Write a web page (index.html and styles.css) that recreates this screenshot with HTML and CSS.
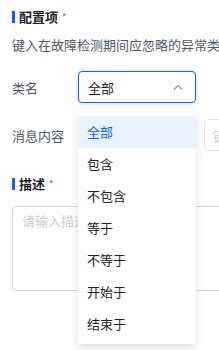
FILE: index.html
```html
<!DOCTYPE html>
<html>
<head>
  <title>配置项</title>
  <link rel="stylesheet" href="styles.css">
</head>
<body>
  <div class="panel">
    <div class="section-title">
      <span class="bar"></span>
      <span>配置项</span>
      <span class="required">*</span>
    </div>
    <p class="section-desc">键入在故障检测期间应忽略的异常类型和消息</p>

    <div class="form-row">
      <label class="form-label">类名</label>
      <div class="select select-open">
        <span class="select-value">全部</span>
        <svg class="select-arrow" width="10" height="6" viewBox="0 0 10 6">
          <polyline points="1,5.5 5,1.5 9,5.5" fill="none" stroke="#86909c" stroke-width="1.2"/>
        </svg>
        <ul class="dropdown">
          <li class="dropdown-item active">全部</li>
          <li class="dropdown-item">包含</li>
          <li class="dropdown-item">不包含</li>
          <li class="dropdown-item">等于</li>
          <li class="dropdown-item">不等于</li>
          <li class="dropdown-item">开始于</li>
          <li class="dropdown-item">结束于</li>
        </ul>
      </div>
    </div>

    <div class="form-row">
      <label class="form-label">消息内容</label>
      <div class="select"></div>
      <input class="text-input" type="text" placeholder="键入消息关键字">
    </div>

    <div class="section-title desc-title">
      <span class="bar"></span>
      <span>描述</span>
      <span class="required">*</span>
    </div>
    <textarea class="textarea" placeholder="请输入描述信息"></textarea>
  </div>
</body>
</html>
```

FILE: styles.css
```css
html,
body {
  overflow: hidden;
}

body {
  margin: 0;
  min-height: 350px;
  font-family: "Noto Sans CJK SC", "Noto Sans", sans-serif;
  font-size: 13px;
  color: #1d2129;
  background-color: #fff;
}

.panel {
  width: 420px;
  min-height: 343px;
  padding: 7px 0 0 12px;
}

.section-title {
  display: flex;
  align-items: center;
  height: 20px;
  line-height: 20px;
  font-weight: 600;
  color: #1d2129;
}

.section-title .bar {
  width: 3px;
  height: 12px;
  margin-right: 4px;
  background-color: #165dff;
}

.required {
  margin-left: 4px;
  font-size: 10px;
  font-weight: normal;
  color: #f53f3f;
}

.section-desc {
  margin: 8px 0 0;
  line-height: 20px;
  white-space: nowrap;
  color: #4e5969;
}

.form-row {
  display: flex;
  align-items: center;
  margin-top: 16px;
  height: 32px;
}

.form-label {
  width: 66px;
  flex-shrink: 0;
  color: #4e5969;
}

.select {
  position: relative;
  display: flex;
  align-items: center;
  justify-content: space-between;
  box-sizing: border-box;
  width: 118px;
  height: 32px;
  padding: 0 12px 0 9px;
  border: 1px solid #e5e6eb;
  border-radius: 4px;
  color: #1d2129;
}

.select-open {
  z-index: 5;
  border-color: #165dff;
  box-shadow: 0 0 0 2px #e8f3ff;
}

.select-arrow {
  display: block;
}

.dropdown {
  position: absolute;
  top: 40px;
  left: -1px;
  z-index: 10;
  width: 118px;
  margin: 0;
  padding: 4px 0;
  list-style: none;
  background-color: #fff;
  border-radius: 4px;
  box-shadow: 0 4px 10px rgba(0, 0, 0, 0.12);
}

.dropdown-item {
  height: 32px;
  line-height: 32px;
  padding-left: 9px;
  color: #1d2129;
}

.dropdown-item.active {
  background-color: #e8f3ff;
  color: #165dff;
}

.text-input {
  box-sizing: border-box;
  width: 160px;
  height: 32px;
  margin-left: 8px;
  padding: 0 8px;
  border: 1px solid #e5e6eb;
  border-radius: 4px;
  font-family: inherit;
  font-size: 13px;
  outline: none;
}

.text-input::placeholder,
.textarea::placeholder {
  color: #c9cdd4;
}

.desc-title {
  margin-top: 23px;
}

.textarea {
  display: block;
  box-sizing: border-box;
  width: 400px;
  height: 85px;
  margin-top: 12px;
  padding: 4px 9px;
  border: 1px solid #d4d7de;
  border-radius: 4px;
  font-family: inherit;
  font-size: 13px;
  line-height: 20px;
  resize: none;
  outline: none;
}
```
